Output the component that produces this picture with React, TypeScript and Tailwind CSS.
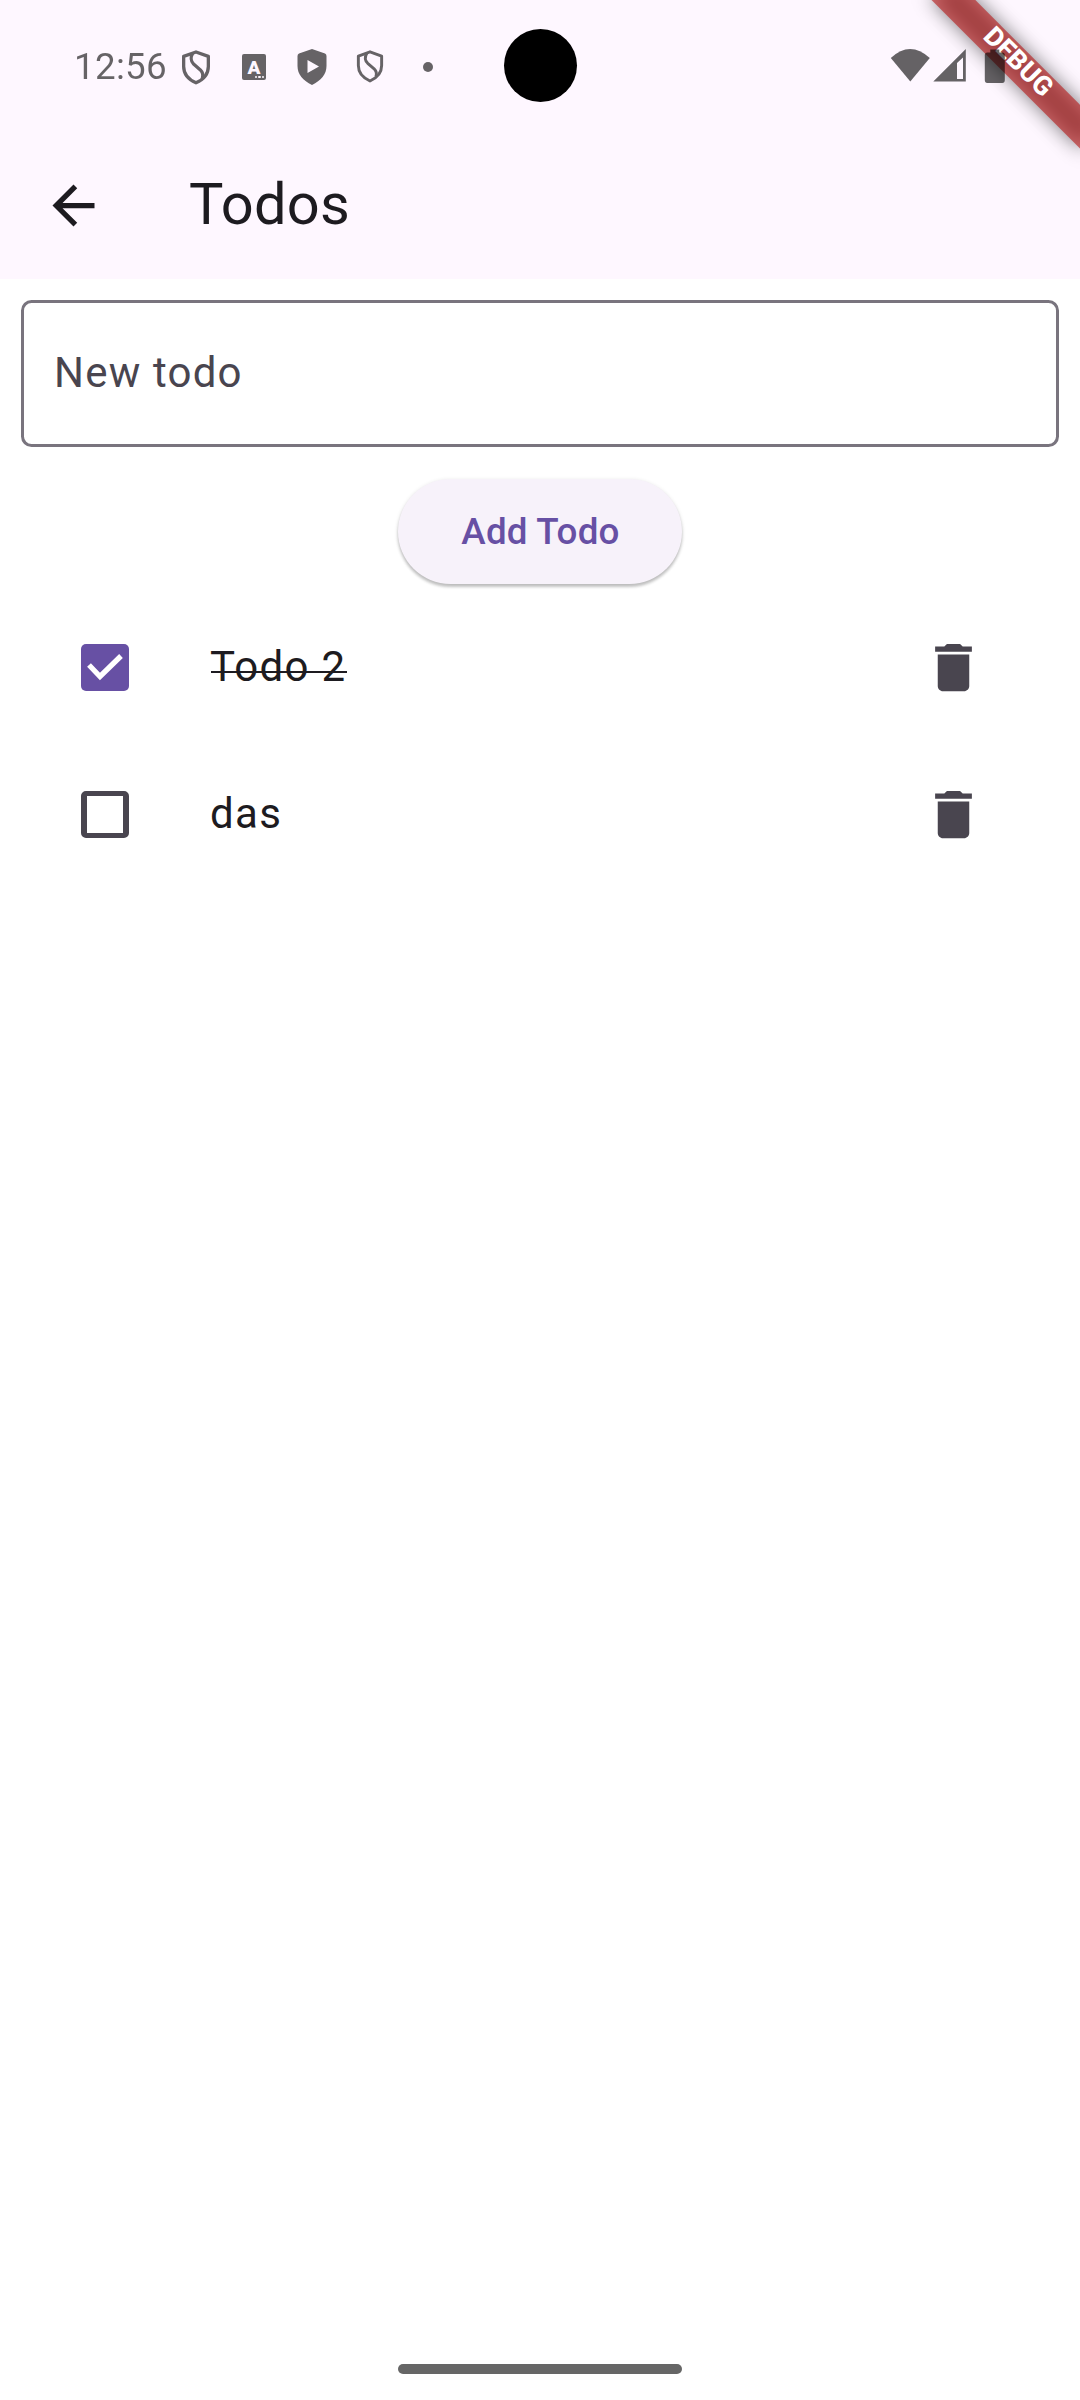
import { useState } from "react";

type Todo = { id: number; title: string; done: boolean };

function SwirlShield({ className, strokeWidth }: { className: string; strokeWidth: number }) {
  return (
    <svg viewBox="0 0 30 36" className={className} fill="none" stroke="black" strokeWidth={strokeWidth} strokeLinejoin="round">
      <path d="M15 2 27.7 6.600V17C27.700 24.500 22.500 30.500 15 33.800 7.500 30.500 2.300 24.500 2.300 17V6.600Z" />
      <path d="M11.500 3.500C9.500 7 9.500 11.500 12.500 14.500L19.500 20.500C22.500 23.500 22.500 26 21.500 29" />
    </svg>
  );
}

function LetterIcon() {
  return (
    <div className="relative h-[26px] w-6 rounded-[2px] bg-black text-center font-black text-[#fef7ff]">
      <span className="block text-[19px] leading-[27px]">A</span>
      <span className="absolute right-[2px] bottom-[2px] flex gap-[1px]">
        <i className="size-[2.500px] rounded-full bg-[#fef7ff]" />
        <i className="size-[2.500px] rounded-full bg-[#fef7ff]" />
        <i className="size-[2.500px] rounded-full bg-[#fef7ff]" />
      </span>
    </div>
  );
}

function StatusBar() {
  return (
    <div className="relative z-20 flex h-[132px] items-start">
      <div className="flex h-[132px] items-center opacity-60">
        <span className="ml-[74px] w-[107px] pt-[2px] text-[36.750px] leading-none tracking-[0.3px]">12:56</span>
        <SwirlShield className="mt-[3px] h-[35px] w-[30px]" strokeWidth={3.4} />
        <div className="mt-[2px] ml-[31px]">
          <LetterIcon />
        </div>
        <svg viewBox="0 0 30 36" className="mt-[2px] ml-[31px] h-[36px] w-[30px]">
          <path fillRule="evenodd" d="M15 0 28 4.500Q29.500 5 29.500 7V17C29.500 25.500 24 31.500 15 36 6 31.500.5 25.500.5 17V7Q.5 5 2 4.500ZM10.500 11V24L22 17.500Z" />
        </svg>
        <SwirlShield className="mt-[1px] ml-[29px] h-[33px] w-[28px]" strokeWidth={3.2} />
        <i className="mt-[2px] ml-[39px] size-[10px] rounded-full bg-black" />
      </div>
      <div className="mt-[29px] ml-[70.500px] size-[73px] rounded-full bg-black" />
      <svg viewBox="0 0 116 36" className="mt-[48px] ml-[313.500px] h-[36px] w-[116px] opacity-60">
        <path d="M.8 10Q20-8 39.800 10L20.300 33.500Z" />
        <path fillRule="evenodd" d="M43.300 33.500 75.800 1V33.500ZM67 15V31H73V9.500Z" />
        <path d="M94.300 4.500H100.300V1.500H109.300V4.500H112.300Q114.800 4.500 114.800 7V32Q114.800 35 112.300 35H97.300Q94.800 35 94.800 32V7Q94.800 4.500 97.300 4.500Z" />
      </svg>
    </div>
  );
}

function DebugBanner() {
  return (
    <div className="pointer-events-none absolute top-0 right-0 z-10 size-[220px] overflow-hidden">
      <div className="absolute top-0 left-full origin-top-left rotate-45">
        <div className="absolute top-[73.500px] left-[-105px] h-[31.500px] w-[210px] bg-black/50 blur-[9.600px]" />
        <div className="absolute top-[73.500px] left-[-105px] flex h-[31.500px] w-[210px] items-center justify-center bg-[#b71c1c]/63 pb-[3px] text-[26.775px] leading-none font-extrabold text-white">
          DEBUG
        </div>
      </div>
    </div>
  );
}

function TodoRow({ todo, onToggle, onDelete }: { todo: Todo; onToggle: () => void; onDelete: () => void }) {
  return (
    <li className="flex h-[147px] items-center pr-[64px] pl-[42px]">
      <button onClick={onToggle} aria-label="Toggle todo" className="flex size-[126px] items-center justify-center">
        {todo.done ? (
          <svg viewBox="0 0 48 47" className="h-[47px] w-[48px]">
            <rect width="48" height="47" rx="5" fill="#6750a4" />
            <path d="M8 21 19 32.500 40 12" fill="none" stroke="white" strokeWidth="5.250" />
          </svg>
        ) : (
          <span className="h-[47px] w-[48px] rounded-[5px] border-x-6 border-y-5 border-[#49454f]" />
        )}
      </button>
      <div className="ml-[42px] flex-1 pb-[2px] text-[42px] leading-[63px] tracking-[1.3125px]">
        <span className="relative inline-block">
          {todo.title}
          {todo.done && <i className="absolute top-[36px] right-0 left-[1px] h-[2px] bg-[#1d1b20]" />}
        </span>
      </div>
      <button onClick={onDelete} aria-label="Delete todo" className="flex size-[126px] items-center justify-center">
        <svg viewBox="0 0 24 24" className="size-[63px]" fill="#49454f">
          <path d="M6 19c0 1.100.9 2 2 2h8c1.100 0 2-.9 2-2V7H6v12zM19 4h-3.500l-1-1h-5l-1 1H5v2h14V4z" />
        </svg>
      </button>
    </li>
  );
}

export default function App() {
  const [draft, setDraft] = useState("");
  const [todos, setTodos] = useState<Todo[]>([
    { id: 1, title: "Todo 2", done: true },
    { id: 2, title: "das", done: false },
  ]);

  const addTodo = () => {
    if (!draft.trim()) return;
    setTodos([...todos, { id: Date.now(), title: draft, done: false }]);
    setDraft("");
  };

  return (
    <div className="relative flex h-[2400px] w-[1080px] flex-col overflow-hidden bg-white font-[Roboto,sans-serif] text-[#1d1b20]">
      <DebugBanner />
      <header className="h-[279px] bg-[#fef7ff]">
        <div className="text-black">
          <StatusBar />
        </div>
        <div className="flex h-[147px] items-center">
          <button aria-label="Back" className="flex w-[147px] justify-center">
            <svg viewBox="0 0 24 24" className="size-[63px]" fill="#1d1b20">
              <path d="M20 11H7.830l5.590-5.590L12 4l-8 8 8 8 1.410-1.410L7.830 13H20v-2z" />
            </svg>
          </button>
          <h1 className="ml-[42px] pb-[2px] text-[57.750px] leading-[73.500px] tracking-[0.2px]">Todos</h1>
        </div>
      </header>

      <main className="flex flex-1 flex-col">
        <input
          value={draft}
          onChange={(e) => setDraft(e.target.value)}
          placeholder="New todo"
          className="mx-[21px] mt-[21px] h-[147px] rounded-[10.500px] border-3 border-[#79747e] px-[30px] pb-[3px] text-[42px] tracking-[1.2px] placeholder:text-[#49454f]"
        />
        <button
          onClick={addTodo}
          className="mt-[32px] h-[105px] w-[284px] self-center rounded-full bg-[#f7f2fa] pt-[1px] pl-[1px] text-[36.750px] font-medium tracking-[0.2625px] text-[#6750a4] shadow-[0_3px_3px_rgba(0,0,0,0.2),0_1px_4px_rgba(0,0,0,0.12)]"
        >
          Add Todo
        </button>
        <ul className="mt-[9.500px]">
          {todos.map((todo) => (
            <TodoRow
              key={todo.id}
              todo={todo}
              onToggle={() => setTodos(todos.map((t) => (t.id === todo.id ? { ...t, done: !t.done } : t)))}
              onDelete={() => setTodos(todos.filter((t) => t.id !== todo.id))}
            />
          ))}
        </ul>
      </main>

      <div className="mb-[26px] h-[10px] w-[284px] self-center rounded-full bg-[#666666]" />
    </div>
  );
}
